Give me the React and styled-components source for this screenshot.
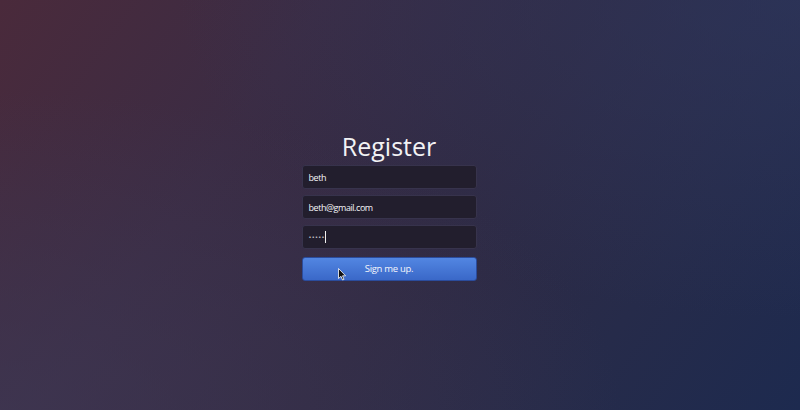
import styled, { createGlobalStyle } from "styled-components";

const GlobalStyle = createGlobalStyle`
  html, body {
    margin: 0;
    padding: 0;
    height: 100%;
  }
  body {
    font-family: "Open Sans", "Liberation Sans", sans-serif;
    background: #2f2a42;
  }
  #root {
    height: 100%;
  }
`;

export default function App() {
  return (
    <>
      <GlobalStyle />
      <Page>
        <Form onSubmit={(e) => e.preventDefault()}>
          <Title>Register</Title>
          <Field>beth</Field>
          <Field>beth@gmail.com</Field>
          <Field>
            <Dots>•••••</Dots>
            <Caret />
          </Field>
          <ButtonWrap>
            <SubmitButton type="submit">Sign me up.</SubmitButton>
            <Pointer viewBox="0 0 8 13" width="8" height="13">
              <path
                d="M0.5 0.5 L0.5 10.5 L3 8.3 L4.6 12 L6 11.4 L4.5 7.8 L7.6 7.8 Z"
                fill="#111"
                stroke="#fff"
                strokeWidth="0.8"
                strokeLinejoin="round"
              />
            </Pointer>
          </ButtonWrap>
        </Form>
      </Page>
    </>
  );
}

const Page = styled.div`
  width: 800px;
  height: 410px;
  box-sizing: border-box;
  display: flex;
  align-items: center;
  justify-content: center;
  padding: 0 22px 0 0;
  background:
    radial-gradient(ellipse at 0% 100%, rgba(62, 56, 84, 0.7), transparent 55%),
    radial-gradient(ellipse at 100% 0%, rgba(46, 56, 96, 0.6), transparent 55%),
    linear-gradient(125deg, #4a2a3b 0%, #3b2c44 30%, #302a43 55%, #262b4a 78%, #1d2a4f 100%);
  overflow: hidden;
`;

const Form = styled.form`
  width: 175px;
  display: flex;
  flex-direction: column;
  gap: 6px;
  margin-top: 1px;
`;

const Title = styled.h1`
  margin: 0 0 -3px;
  font-family: "Open Sans", "Liberation Sans", sans-serif;
  font-weight: 400;
  font-size: 25px;
  line-height: 32px;
  text-align: center;
  color: #f2f2f4;
`;

const Field = styled.div`
  height: 24px;
  box-sizing: border-box;
  display: flex;
  align-items: center;
  padding: 0 6px;
  background: #221e2d;
  border: 1px solid #37334c;
  border-radius: 3px;
  font-size: 9px;
  letter-spacing: -0.45px;
  color: #f4f4f7;
`;

const Dots = styled.span`
  font-family: "DejaVu Sans", sans-serif;
  font-size: 5px;
  letter-spacing: 0.3px;
  color: #e6e6ea;
`;

const Caret = styled.span`
  display: inline-block;
  width: 1px;
  height: 12px;
  margin-left: 0;
  background: #f0f0f0;
`;

const ButtonWrap = styled.div`
  position: relative;
`;

const SubmitButton = styled.button`
  width: 100%;
  height: 24px;
  box-sizing: border-box;
  border: 1px solid #2b4c9c;
  border-radius: 3px;
  background: linear-gradient(#5286e2, #3a68c8);
  color: #f4f6fb;
  font-family: "Open Sans", "Liberation Sans", sans-serif;
  font-size: 9.5px;
  letter-spacing: -0.3px;
  padding: 0;
  cursor: pointer;
`;

const Pointer = styled.svg`
  position: absolute;
  left: 36px;
  top: 13px;
`;
